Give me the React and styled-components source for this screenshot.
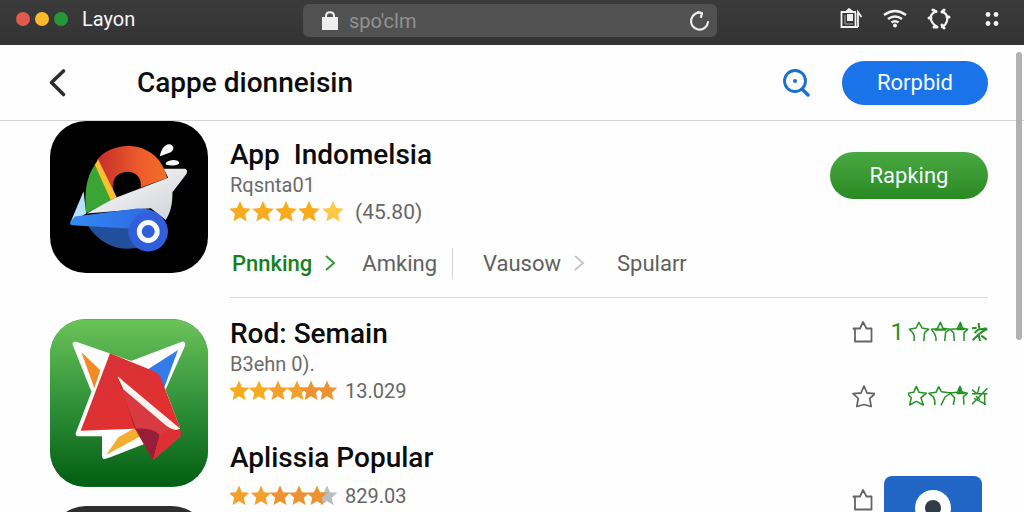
import React from "react";
import styled, { createGlobalStyle } from "styled-components";

const GlobalStyle = createGlobalStyle`
  * { box-sizing: border-box; }
  body { margin: 0; background: #fefefe; font-family: Roboto, "Liberation Sans", sans-serif; color: #0c0c0c; }
  h1, h2, p { margin: 0; font-weight: 500; }
  button, input { font-family: inherit; border: 0; padding: 0; background: none; }
  button { cursor: pointer; }
  svg { display: block; flex: none; }
`;

const Page = styled.div`
  position: relative;
  height: 100vh;
  overflow: hidden;
`;

const TitleBar = styled.div`
  display: grid;
  grid-template-columns: 1fr minmax(160px, 414px) 1fr;
  align-items: center;
  height: 45px;
  padding: 0 4px 8px 0;
  background: linear-gradient(#3b3b3b, #333);
`;

const WindowTitle = styled.div`
  display: flex;
  align-items: center;
  gap: 5px;
  padding-left: 16px;
  color: #f6f6f6;
  font-size: 20px;
`;

const Dot = styled.span`
  width: 14px;
  height: 14px;
  border-radius: 50%;
  background: ${(p) => p.$color};
`;

const TabName = styled.span`
  margin-left: 9px;
`;

const AddressBar = styled.label`
  display: flex;
  align-items: center;
  gap: 10px;
  height: 33px;
  margin-top: 4px;
  padding: 0 6px 0 18px;
  border-radius: 6px;
  background: #515151;
`;

const Address = styled.input`
  flex: 1;
  min-width: 0;
  color: #929292;
  font-size: 20px;
  outline: none;
`;

const SystemIcons = styled.div`
  display: flex;
  justify-content: flex-end;
  align-items: center;
  gap: 20px;
  padding-right: 16px;
`;

const IconButton = styled.button`
  display: grid;
  place-items: center;
  margin-left: ${(p) => p.$before || 0}px;
`;

const Header = styled.header`
  display: flex;
  align-items: center;
  height: 76px;
  padding: 0 36px 0 48px;
  border-bottom: 1px solid #d4d4d4;
`;

const PageTitle = styled.h1`
  flex: 1;
  margin-left: 69px;
  font-size: 28px;
  line-height: 36px;
`;

const HeaderActions = styled.div`
  display: flex;
  align-items: center;
  gap: 32px;
`;

const Pill = styled.button`
  height: ${(p) => (p.$green ? 47 : 44)}px;
  width: ${(p) => (p.$green ? 158 : 146)}px;
  border-radius: 24px;
  color: #f4faff;
  font-size: 22px;
  background: ${(p) => (p.$green ? "linear-gradient(#4aa842, #2a8a22)" : "#1a73e8")};
`;

const Content = styled.main`
  display: grid;
  grid-template-columns: 158px 1fr;
  column-gap: 22px;
  padding: 0 36px 0 50px;
`;

const IconColumn = styled.div`
  display: flex;
  flex-direction: column;
`;

const AppTile = styled.div`
  height: ${(p) => p.$height}px;
  margin-bottom: ${(p) => p.$after}px;
  border-radius: 36px;
  overflow: hidden;
  background: ${(p) => p.$fill};
`;

const Entry = styled.article`
  display: flex;
  justify-content: space-between;
  align-items: flex-start;
`;

const Featured = styled.section`
  height: 177px;
  padding-top: 17px;
  border-bottom: 1px solid #d6d8dc;
`;

const Listing = styled.section`
  padding-top: ${(p) => p.$top}px;
`;

const AppName = styled.h2`
  font-size: 28px;
  line-height: 34px;
  white-space: pre;
`;

const Maker = styled.p`
  color: #6b6b6b;
  font-size: 20px;
  font-weight: 400;
  line-height: 26px;
`;

const Rating = styled.div`
  display: flex;
  align-items: center;
  gap: ${(p) => p.$gap || 8}px;
  height: 28px;
  margin-top: ${(p) => p.$top || 0}px;
  color: #666;
  font-size: ${(p) => p.$size || 20}px;
`;

const Tabs = styled.nav`
  display: flex;
  align-items: center;
  height: 32px;
  margin-top: 21px;
`;

const Tab = styled.a`
  margin-left: ${(p) => p.$before || 0}px;
  color: ${(p) => (p.$active ? "#16801c" : "#606060")};
  font-size: 22px;
  font-weight: ${(p) => (p.$active ? 500 : 400)};
  text-decoration: none;
`;

const TabArrow = styled.svg`
  margin-left: 12px;
`;

const Separator = styled.span`
  width: 1px;
  height: 31px;
  margin-left: 15px;
  background: #d3d3d3;
`;

const PillSlot = styled.div`
  padding-top: 14px;
`;

const Votes = styled.div`
  display: flex;
  flex-direction: column;
  gap: 40px;
  width: 137px;
  padding-top: 3px;
`;

const VoteRow = styled.div`
  display: flex;
  align-items: center;
  justify-content: space-between;
  height: 24px;
  color: #259127;
  font-size: 24px;
`;

const Score = styled.span`
  display: flex;
  align-items: center;
  gap: 4px;
`;

const TileRow = styled.div`
  display: flex;
  align-items: flex-start;
  gap: 9px;
  width: 137px;
  padding-top: 35px;
`;

const MarkSlot = styled.span`
  padding-top: 12px;
`;

const ScrollThumb = styled.div`
  position: absolute;
  top: 52px;
  right: 2px;
  width: 6px;
  height: 288px;
  border-radius: 3px;
  background: #b1b1b1;
`;

const starPath = "M0-10.5 3-3.7 10.3-3.2 4.8 1.8 6.4 9 0 5.2-6.4 9-4.8 1.8-10.3-3.2-3-3.7Z";

function Stars({ centers, width, scale = 1 }) {
  return (
    <svg width={width} height="24" viewBox={`0 0 ${width} 24`} aria-hidden="true">
      {centers.map(([x, fill]) => (
        <path key={x} d={starPath} fill={fill} transform={`translate(${x} 12) scale(${scale})`} />
      ))}
    </svg>
  );
}

function Chevron({ color }) {
  return (
    <TabArrow width="12" height="18" viewBox="0 0 12 18" fill="none" stroke={color} strokeWidth="2">
      <path d="m2 2 8 7-8 7" />
    </TabArrow>
  );
}

function Bookmark({ full }) {
  return (
    <svg width="24" height="24" viewBox="0 0 24 24" fill="none" stroke="#666" strokeWidth="1.8" strokeLinejoin="round">
      <path
        d={
          full
            ? "m13 2 3 7 8 .7-5.200 4.600 1.300 8.200-7.100-2-7.100 2 1.300-8.200-5.200-4.600 8-.7Z"
            : "M12 2 15.500 8.500H20.500V21.500H4V10L2.500 8.500H9Z"
        }
      />
    </svg>
  );
}

function GreenStars({ closed }) {
  return (
    <svg width="80" height="22" viewBox="190 16 240 66" fill="none" stroke="#259127" strokeWidth="4.500" strokeLinejoin="round">
      {closed ? (
        <g>
          <path d="m213 20 8 18 22 3-16 13 7 22-21-11-20 11 5-22-13-13 20-3Z" transform="translate(2 0)" />
          <path d="M270 76c2-10 0-18-4-24l-13-11 21-3 8-17M282 21l8 15 29 4-18 12-12 25" />
          <path d="M326 76l4-22-14-14 22-2 8-18 7 18 15 3-12 10 2 24" />
          <path d="M336 40h24M346 24v14" strokeWidth="8" />
          <path d="M382 30l14 12M428 26 382 74M404 20l-6 22M382 42h46M388 56l36 18M420 44v32M394 50l12 10" />
        </g>
      ) : (
        <g>
          <path d="M208 76c2-12 0-20-5-26l-9-9 20-4 9-17 9 17 20 4-12 9-3 26" />
          <path d="M274 76c2-12-3-22-14-35l18-2 9-19 8 18 20 3-12 9-3 26" />
          <path d="M329 76l-2-24-10-11 21-2 9-19 7 18 15 3-11 10v25" />
          <path d="M270 42h34M336 40h24M347 25v14" strokeWidth="7" />
          <path d="M382 38l14-2M402 22l2 16M428 40c-18 6-30 20-44 34M390 52l10-10 26-4M402 58l4 18M410 60l16 12" strokeWidth="6" />
        </g>
      )}
    </svg>
  );
}

function RocketIcon() {
  return (
    <svg width="158" height="152" viewBox="28 16 474 458" aria-hidden="true">
      <defs>
        <linearGradient id="red"><stop stopColor="#c52d2c" /><stop offset=".6" stopColor="#ed5a2b" /><stop offset="1" stopColor="#f17028" /></linearGradient>
        <linearGradient id="wing"><stop stopColor="#3489f5" /><stop offset="1" stopColor="#2c62df" /></linearGradient>
        <linearGradient id="paper" x2="1" y2="1"><stop stopColor="#fff" /><stop offset="1" stopColor="#cfd0d6" /></linearGradient>
      </defs>
      <path d="M140 330h160v66c-62 16-120-5-160-66Z" fill="#204f9b" />
      <path d="M168 134c46-62 184-66 212 54l-80 28c10-62-84-62-84-4l6 44Z" fill="url(#red)" />
      <path d="M162 148c-28 40-32 90-26 145l80-38Z" fill="#3aa535" />
      <path d="m162 148 10-16 56 114-18 8Z" fill="#fbc02d" />
      <path d="m128 228-40 95 48-28Z" fill="#b9e0fb" />
      <path d="m370 160 64 0c6 2 8 8 4 16l-34 44-8 10c0 38-6 62-20 84l-45-35-194 16 84-46 162-62Z" fill="url(#paper)" />
      <path d="M88 320 102 304 290 280c50-5 90 25 92 70a60 60 0 0 1-118 8v-18L96 330c-6 0-10-4-8-10Z" fill="url(#wing)" />
      <circle cx="323" cy="350" r="59" fill="#315fda" />
      <circle cx="323" cy="349" r="27" fill="none" stroke="#f5faff" strokeWidth="15" />
      <path d="M358 122c2-16 14-38 29-36 16 3 14 18 4 24Z" fill="#f8f8f8" />
      <path d="M376 142c12-12 35-10 40-2 2 10-20 12-40 8Z" fill="#f8f8f8" />
    </svg>
  );
}

function KiteIcon() {
  return (
    <svg width="158" height="168" viewBox="28 26 474 502" aria-hidden="true">
      <defs>
        <linearGradient id="leaf" x2="0" y2="1"><stop stopColor="#6bc258" /><stop offset=".5" stopColor="#31923a" /><stop offset="1" stopColor="#025e12" /></linearGradient>
        <linearGradient id="kite" x2="1" y2="1"><stop stopColor="#d5333a" /><stop offset="1" stopColor="#e62f2c" /></linearGradient>
      </defs>
      <path d="M28 26h474v502H28Z" fill="url(#leaf)" />
      <path d="m104 101 168 58 154-58-60 136 44 116-206 80-12 4v-68h-79l48-126Z" fill="#fff" stroke="#fff" strokeWidth="16" strokeLinejoin="round" />
      <path d="m122 124 57 55-18 54Z" fill="#f38b25" />
      <path d="m412 118-90 58 46 62Z" fill="#347bea" />
      <path d="m197 432 36-52 50-28 22 22Z" fill="#f4ad2f" />
      <path d="M300 362 418 350l-82 96Z" fill="#2a8734" />
      <path d="M208 128 340 182c12 5 18 12 22 24l56 145-140 3-158 6Z" fill="url(#kite)" />
      <path d="m234 205 48 148 54 94 10-85Z" fill="#a51e2c" />
      <path d="m240 230 178 126-2 24-78 68-50-88Z" fill="#d83a42" />
      <path d="m285 354 52 94 20-74c-12-18-43-21-72-20Z" fill="#981e37" />
      <path d="M357 374q30-26 58-18 10 4 4 22l-82 71Z" fill="#dc3034" />
      <path d="M231 198c5 0 15 12 28 23l158 132c-10 10-26 2-40-8L248 236Z" fill="#fff3f0" />
    </svg>
  );
}

const gold = "#f8ac1c";
const amber = "#f3a02c";
const orange = "#ee922f";

export default function App() {
  return (
    <Page>
      <GlobalStyle />
      <TitleBar>
        <WindowTitle>
          <Dot $color="#e25a4c" />
          <Dot $color="#fbb92b" />
          <Dot $color="#26963a" />
          <TabName>Layon</TabName>
        </WindowTitle>
        <AddressBar>
          <svg width="18" height="20" viewBox="0 0 18 20"><path d="M1 6h16v13H1Z" fill="#eee" /><path d="M5 8V5c0-5 8-5 8 0v3" fill="none" stroke="#eee" strokeWidth="2" /></svg>
          <Address aria-label="Address" defaultValue="spo'clm" />
          <IconButton aria-label="Reload">
            <svg width="22" height="22" viewBox="0 0 22 22" fill="none" stroke="#eee" strokeWidth="2.200" strokeLinecap="round" strokeLinejoin="round"><path d="M19 12a8.500 8.500 0 1 1-6-9l-4-1M13 3l-1 4" /></svg>
          </IconButton>
        </AddressBar>
        <SystemIcons>
          <IconButton aria-label="Share">
            <svg width="24" height="22" viewBox="0 0 24 22" fill="none" stroke="#f2f2f2" strokeWidth="1.800"><path d="M7 4H2.500v15h14V5M19 19V4l3.500 5M16 19h3M6 4h11M7 4l3-3 4 3" /><path d="M6 7v9h8" stroke="#aaa" strokeWidth="1" /><path d="M8 6h6v7H8Z" fill="#f2f2f2" stroke="none" /></svg>
          </IconButton>
          <IconButton aria-label="Wi-Fi">
            <svg width="24" height="20" viewBox="0 0 24 20" fill="none" stroke="#f2f2f2" strokeWidth="2.600"><path d="M1 6q11-8 22 0M5 10q7-5 14 0M8.500 13.500q3.500-2.500 7 0" /><circle cx="12" cy="16.500" r="2" fill="#f2f2f2" stroke="none" /></svg>
          </IconButton>
          <IconButton aria-label="Sync">
            <svg width="24" height="22" viewBox="0 0 24 22" fill="none" stroke="#f2f2f2" strokeWidth="2.200" strokeLinecap="round"><path d="M8 4C4 6 3 9 4 12s3 5 6 7M16 4c4 2 5 5 4 9s-3 5-5 6" /><path d="M6 2l3 1.500M17 2l-2 2M2 10h2M20 9h2M7 19h3M15 17l2 3" strokeWidth="3" /></svg>
          </IconButton>
          <IconButton aria-label="Menu" $before={9}>
            <svg width="24" height="18" viewBox="0 0 24 18" fill="#f2f2f2"><circle cx="8" cy="4.500" r="2.400" /><circle cx="16" cy="4.500" r="2.400" /><circle cx="8" cy="13.500" r="2.400" /><circle cx="16" cy="13.500" r="2.400" /></svg>
          </IconButton>
        </SystemIcons>
      </TitleBar>

      <Header>
        <IconButton aria-label="Back">
          <svg width="20" height="30" viewBox="0 0 20 30" fill="none" stroke="#2d2d2d" strokeWidth="3.600" strokeLinecap="round" strokeLinejoin="round"><path d="M15.500 3 3.500 14.500l12 12" /></svg>
        </IconButton>
        <PageTitle>Cappe dionneisin</PageTitle>
        <HeaderActions>
          <IconButton aria-label="Search">
            <svg width="28" height="28" viewBox="0 0 28 28" fill="none" stroke="#1a6fd4" strokeWidth="2.800" strokeLinecap="round"><circle cx="13" cy="12" r="10.500" /><path d="m20 20 6 6" strokeWidth="3.500" /><circle cx="13" cy="12" r="2" fill="#1a6fd4" stroke="none" /></svg>
          </IconButton>
          <Pill>Rorpbid</Pill>
        </HeaderActions>
      </Header>

      <Content>
        <IconColumn>
          <AppTile $height={152} $after={46} $fill="#000"><RocketIcon /></AppTile>
          <AppTile $height={168} $after={19} $fill="#2c8c35"><KiteIcon /></AppTile>
          <AppTile $height={152} $after={0} $fill="#2d2e30" />
        </IconColumn>
        <div>
          <Featured>
            <Entry>
              <div>
                <AppName>{"App  Indomelsia"}</AppName>
                <Maker>Rqsnta01</Maker>
                <Rating $gap={10} $size={21}>
                  <Stars width={115} scale={1.05} centers={[[10, gold], [33, gold], [56, gold], [79, gold], [103, "#fdc843"]]} />
                  (45.80)
                </Rating>
              </div>
              <PillSlot><Pill $green>Rapking</Pill></PillSlot>
            </Entry>
            <Tabs>
              <Tab href="#ranking" $active $before={2}>Pnnking</Tab>
              <Chevron color="#38943d" />
              <Tab href="#amking" $before={26}>Amking</Tab>
              <Separator />
              <Tab href="#vausow" $before={30}>Vausow</Tab>
              <Chevron color="#c6c6c6" />
              <Tab href="#spularr" $before={32}>Spularr</Tab>
            </Tabs>
          </Featured>
          <Listing $top={19}>
            <Entry>
              <div>
                <AppName>Rod: Semain</AppName>
                <Maker>B3ehn 0).</Maker>
                <Rating>
                  <Stars width={107} centers={[[9, gold], [29, gold], [48, amber], [67, amber], [81, orange], [97, orange]]} />
                  13.029
                </Rating>
              </div>
              <Votes>
                <VoteRow><Bookmark /><Score>1<GreenStars /></Score></VoteRow>
                <VoteRow><Bookmark full /><Score><GreenStars closed /></Score></VoteRow>
              </Votes>
            </Entry>
          </Listing>
          <Listing $top={33}>
            <Entry>
              <div>
                <AppName>Aplissia Popular</AppName>
                <Rating $top={7}>
                  <Stars width={107} centers={[[9, amber], [31, amber], [50, orange], [69, orange], [97, "#b9bdc6"], [87, orange]]} />
                  829.03
                </Rating>
              </div>
              <TileRow>
                <MarkSlot><Bookmark /></MarkSlot>
                <svg width="98" height="80" viewBox="0 0 98 80"><rect width="98" height="90" rx="8" fill="#2166c4" /><circle cx="49" cy="32" r="18" fill="#fff" /><circle cx="49" cy="32" r="8" fill="#343b48" /></svg>
              </TileRow>
            </Entry>
          </Listing>
        </div>
      </Content>
      <ScrollThumb />
    </Page>
  );
}
